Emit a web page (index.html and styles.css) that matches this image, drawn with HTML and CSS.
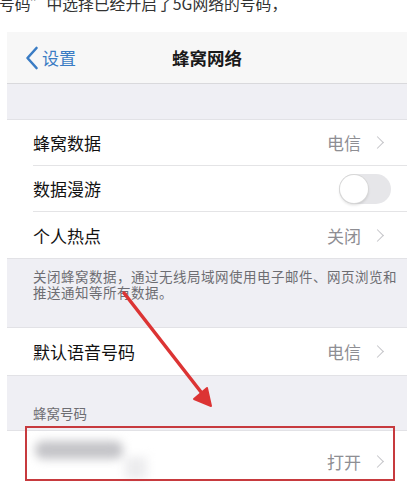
FILE: index.html
```html
<!DOCTYPE html>
<html lang="zh">
<head>
<meta charset="utf-8">
<link rel="stylesheet" href="styles.css">
</head>
<body>
<div class="caption"><p class="caption-text">号码”中选择已经开启了5G网络的号码，</p></div>
<div class="phone">
  <div class="nav">
    <div class="back">
      <svg class="back-icon" width="14" height="24" viewBox="0 0 14 24"><path d="M11.5 2 L2.5 12 L11.5 22" fill="none" stroke="#3a7cc4" stroke-width="2.6" stroke-linecap="round" stroke-linejoin="round"/></svg>
      <span>设置</span>
    </div>
    <div class="title">蜂窝网络</div>
  </div>
  <div class="gap-top"></div>
  <div class="group">
    <div class="row"><span class="label">蜂窝数据</span><span class="value">电信</span><span class="chev"></span></div>
    <div class="row"><span class="label">数据漫游</span><span class="toggle"><span class="knob"></span></span></div>
    <div class="row last"><span class="label">个人热点</span><span class="value">关闭</span><span class="chev"></span></div>
  </div>
  <p class="footnote">关闭蜂窝数据，通过无线局域网使用电子邮件、网页浏览和推送通知等所有数据。</p>
  <div class="group">
    <div class="row tall last"><span class="label">默认语音号码</span><span class="value">电信</span><span class="chev"></span></div>
  </div>
  <div class="section-head">蜂窝号码</div>
  <div class="group">
    <div class="row number last">
      <span class="blur"><span class="blob1"></span><span class="blob2"></span></span>
      <span class="value">打开</span><span class="chev"></span>
    </div>
  </div>
  <div class="highlight"></div>
</div>
<svg class="arrow" width="413" height="482" viewBox="0 0 413 482">
  <path d="M124 293 L201 392" stroke="#dc3434" stroke-width="3.5" stroke-linecap="round"/>
  <path d="M211 406 L194 399 L207 388 Z" fill="#dc3434" stroke="#dc3434" stroke-width="2" stroke-linejoin="round"/>
</svg>
</body>
</html>
```
FILE: styles.css
```css
html, body {
  margin: 0;
  padding: 0;
  background: #ffffff;
  width: 413px;
  height: 482px;
  overflow: hidden;
  font-family: "Noto Sans CJK SC", "Noto Sans", sans-serif;
}

.caption {
  height: 32px;
  overflow: hidden;
}

.caption-text {
  margin: -6px 0 0 -1px;
  font-size: 15.8px;
  line-height: 20px;
  color: #333333;
  white-space: nowrap;
}

.phone {
  position: relative;
  margin-left: 7px;
  width: 400px;
  height: 450px;
  background: #efeff4;
}

.nav {
  position: relative;
  height: 51px;
  background: #f7f7f7;
  border-bottom: 1px solid #d9d9dc;
  display: flex;
  align-items: center;
}

.back {
  display: flex;
  align-items: center;
  gap: 3px;
  padding-left: 18px;
  color: #3a7cc4;
  font-size: 17px;
}

.title {
  position: absolute;
  left: 0;
  right: 0;
  top: 0;
  bottom: 0;
  display: flex;
  align-items: center;
  justify-content: center;
  font-size: 17.5px;
  font-weight: 700;
  color: #1a1a1a;
  pointer-events: none;
}

.gap-top {
  height: 35px;
}

.group {
  background: #ffffff;
  border-top: 1px solid #e2e2e6;
  border-bottom: 1px solid #e2e2e6;
}

.row {
  height: 46px;
  margin-left: 26px;
  padding-right: 22px;
  display: flex;
  align-items: center;
  border-bottom: 1px solid #e4e4e6;
  box-sizing: border-box;
}

.row.last {
  border-bottom: none;
}

.row.tall {
  height: 47px;
}

.row.number {
  height: 53px;
}

.label {
  flex: 1;
  font-size: 17px;
  color: #111111;
}

.value {
  font-size: 17px;
  color: #8e8e93;
  margin-right: 12px;
}

.row.number .value {
  margin-left: auto;
  padding-top: 8px;
}

.row.number .chev {
  margin-top: 8px;
}

.chev {
  width: 8px;
  height: 8px;
  border-top: 1.6px solid #c4c4c8;
  border-right: 1.6px solid #c4c4c8;
  transform: rotate(45deg);
  margin-right: 3px;
}

.toggle {
  width: 52px;
  height: 30px;
  border-radius: 15px;
  background: #e6e6e9;
  margin-right: -6px;
  position: relative;
  box-sizing: border-box;
}

.knob {
  position: absolute;
  left: 1px;
  top: 1px;
  width: 28px;
  height: 28px;
  border-radius: 50%;
  background: #ffffff;
  box-shadow: 0 0 0 1px #d8d8d8, 0 2px 3px rgba(0,0,0,0.15);
}

.footnote {
  margin: 0;
  padding: 9px 5px 27px 26px;
  font-size: 13.5px;
  letter-spacing: 0.5px;
  line-height: 16px;
  color: #6d6d72;
}

.section-head {
  height: 54px;
  box-sizing: border-box;
  padding: 27px 0 0 26px;
  font-size: 13.5px;
  color: #6d6d72;
}

.blur {
  position: relative;
  align-self: flex-start;
  width: 120px;
  height: 50px;
  filter: blur(5px);
}

.blob1 {
  position: absolute;
  left: 2px;
  top: 10px;
  width: 88px;
  height: 18px;
  background: #c4c4c8;
  border-radius: 8px;
}

.blob2 {
  position: absolute;
  left: 92px;
  top: 26px;
  width: 22px;
  height: 22px;
  background: #ececee;
}

.highlight {
  position: absolute;
  left: 18px;
  top: 394px;
  width: 370px;
  height: 55px;
  border: 2px solid #c73a3e;
  box-sizing: border-box;
}

.arrow {
  position: absolute;
  left: 0;
  top: 0;
  pointer-events: none;
}
```
